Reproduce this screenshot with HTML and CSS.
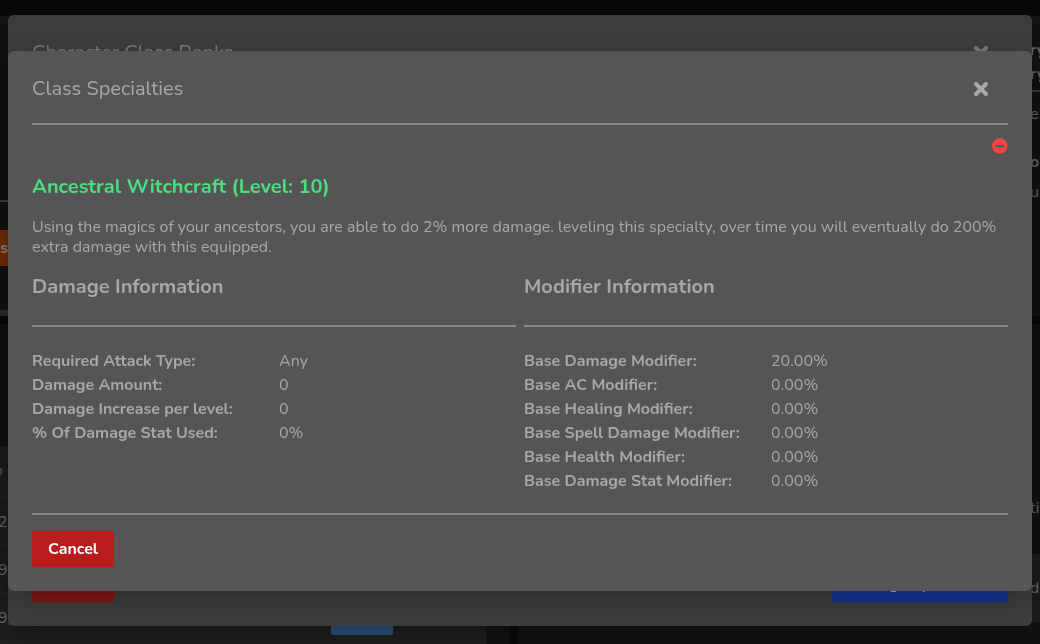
FILE: index.html
```html
<!DOCTYPE html>
<html lang="en">
<head>
<meta charset="utf-8">
<meta name="viewport" content="width=device-width, initial-scale=1">
<title>Class Specialties</title>
<link rel="stylesheet" href="styles.css">
</head>
<body>
<div class="page" aria-hidden="true">
  <div class="topbar"></div>
  <div class="columns">
    <div class="column">
      <section class="card card-top">
        <hr class="card-rule">
        <button class="orange-tab" type="button" tabindex="-1">s</button>
        <div class="scroll-track"></div>
      </section>
      <section class="card card-fill">
        <div class="list">
          <div class="list-row list-head">%</div>
          <div class="list-row">28</div>
          <div class="list-row">9,</div>
          <div class="list-row"><span>9,</span><span class="page-button"></span></div>
          <div class="list-row"></div>
        </div>
      </section>
    </div>
    <div class="column">
      <section class="card card-side">
        <div class="strip">
          <b class="s-line">ry</b>
          <b class="s-line">ry</b>
          <hr class="s-rule">
          <span class="s-item">e</span>
          <b class="s-item s-space">o</b>
          <span class="s-item">ur</span>
        </div>
      </section>
      <section class="card card-fill">
        <div class="strip strip-low">
          <span class="s-tab">tin</span>
          <span class="s-panel">d</span>
        </div>
      </section>
    </div>
  </div>
</div>

<div class="overlay">
  <div class="modal modal-back" aria-hidden="true">
    <header class="modal-header">
      <h3 class="modal-title">Character Class Ranks</h3>
      <button class="close" type="button" tabindex="-1" aria-label="Close">
        <svg viewBox="0 0 14 14" width="14" height="14"><path d="M2 2l10 10M12 2L2 12"/></svg>
      </button>
    </header>
    <footer class="modal-footer">
      <button class="btn btn-red" type="button" tabindex="-1">Cancel</button>
      <button class="btn btn-blue" type="button" tabindex="-1">Manage Specialties</button>
    </footer>
  </div>
</div>

<div class="overlay overlay-front">
  <div class="modal" role="dialog" aria-labelledby="dialog-title">
    <header class="modal-header">
      <h3 class="modal-title" id="dialog-title">Class Specialties</h3>
      <button class="close" type="button" aria-label="Close">
        <svg viewBox="0 0 14 14" width="14" height="14"><path d="M2 2l10 10M12 2L2 12"/></svg>
      </button>
    </header>
    <div class="modal-body">
      <div class="tools">
        <button class="remove" type="button" aria-label="Remove specialty">
          <svg viewBox="0 0 16 16" width="16" height="16"><path fill-rule="evenodd" d="M7.750 0.250a7.750 7.750 0 1 0 0 15.500A7.750 7.750 0 0 0 7.750 0.250zM4 7h7.500a.5.5 0 0 1 .5.5v1.300a.5.5 0 0 1-.5.5H4a.5.5 0 0 1-.5-.5V7.500a.5.5 0 0 1 .5-.5z"/></svg>
        </button>
      </div>
      <h4 class="specialty">Ancestral Witchcraft (Level: 10)</h4>
      <p class="description">Using the magics of your ancestors, you are able to do 2% more damage. leveling this specialty, over time you will eventually do 200% extra damage with this equipped.</p>
      <div class="info">
        <section>
          <h4 class="info-title">Damage Information</h4>
          <dl class="stats">
            <dt>Required Attack Type:</dt><dd>Any</dd>
            <dt>Damage Amount:</dt><dd>0</dd>
            <dt>Damage Increase per level:</dt><dd>0</dd>
            <dt>% Of Damage Stat Used:</dt><dd>0%</dd>
          </dl>
        </section>
        <section>
          <h4 class="info-title">Modifier Information</h4>
          <dl class="stats">
            <dt>Base Damage Modifier:</dt><dd>20.00%</dd>
            <dt>Base AC Modifier:</dt><dd>0.00%</dd>
            <dt>Base Healing Modifier:</dt><dd>0.00%</dd>
            <dt>Base Spell Damage Modifier:</dt><dd>0.00%</dd>
            <dt>Base Health Modifier:</dt><dd>0.00%</dd>
            <dt>Base Damage Stat Modifier:</dt><dd>0.00%</dd>
          </dl>
        </section>
      </div>
    </div>
    <footer class="modal-footer">
      <button class="btn btn-red" type="button">Cancel</button>
    </footer>
  </div>
</div>
</body>
</html>
```
FILE: styles.css
```css
* { box-sizing: border-box; }
body {
  margin: 0;
  background: #090909;
  color: #a8a8a8;
  font: 16px/24px Nunito, Lato, sans-serif;
  overflow: hidden;
}
h3, h4, p, dl, dd { margin: 0; }
button { font: inherit; color: inherit; border: 0; padding: 0; background: none; }
hr { border: 0; margin: 0; }

/* page under the dialogs */
.page { display: flex; flex-direction: column; height: 100vh; color: #6c6e6d; }
.topbar { height: 16px; flex: none; }
.columns { flex: 1; display: grid; grid-template-columns: 510fr 522fr; gap: 8px; min-height: 0; }
.column { display: flex; flex-direction: column; gap: 8px; min-width: 0; min-height: 0; }
.card { background: #121413; }
.card-top { height: 300px; flex: none; display: flex; flex-direction: column; padding-top: 184px; }
.card-side { height: 300px; flex: none; padding-top: 22px; }
.card-rule { height: 2px; background: #424242; }
.orange-tab {
  width: 8px; height: 36px; margin: 28px 0 44px;
  display: flex; align-items: center; justify-content: flex-end;
  background: #7a3009; color: #958d86; font-weight: 700;
}
.scroll-track { height: 6px; background: #2f2f2f; }
.card-fill { flex: 1; min-height: 0; overflow: hidden; padding-top: 122px; background: #111313; }
.list { margin-right: 24px; background: #1e1e1e; }
.list-row { height: 48px; display: flex; align-items: center; border-bottom: 1px solid #262626; text-indent: -2px; }
.list-head { height: 52px; padding-bottom: 4px; text-indent: -12px; }
.page-button {
  width: 62px; height: 36px; margin: 0 93px 6px auto; align-self: flex-end;
  background: #2b4b74; border-radius: 2px;
}
.strip { width: 10px; margin-left: auto; overflow: hidden; display: flex; flex-direction: column; }
.s-rule { height: 2px; margin: 4px 0 10px; background: #424242; }
.s-item { height: 24px; margin-bottom: 6px; }
.s-space { margin-top: 18px; }
.strip-low { margin-top: -122px; padding-top: 172px; }
.s-tab { padding-bottom: 34px; }
.s-panel { height: 68px; line-height: 68px; background: #1e1e1e; }

/* dialogs */
.overlay { position: fixed; inset: 0; padding: 15px 8px 18px; display: flex; }
.overlay-front { padding: 51px 8px; align-items: flex-start; }
.modal {
  flex: 1; display: flex; flex-direction: column;
  padding: 24px; border-radius: 6px;
  background: #555; box-shadow: 0 8px 28px rgba(0, 0, 0, .25);
}
.modal-back { background: #3d3d3d; color: #7a7a7a; justify-content: space-between; }
.modal-header {
  display: flex; justify-content: space-between; align-items: center;
  height: 50px; padding: 0 20px 20px 0; border-bottom: 2px solid #888;
}
.modal-back .modal-header { border-color: #666; }
.modal-title { font-size: 20px; font-weight: 400; }
.close { display: flex; }
.close svg { fill: none; stroke: currentColor; stroke-width: 4; stroke-linecap: round; }
.tools { display: flex; justify-content: flex-end; padding-top: 13px; }
.remove { display: flex; }
.remove svg { fill: #ef4444; }
.specialty { margin-top: 21px; font-size: 20px; font-weight: 700; color: #4ade80; }
.description { margin-top: 18px; line-height: 20px; }
.info { display: grid; grid-template-columns: 1fr 1fr; gap: 8px; margin-top: 18px; }
.info-title { padding-bottom: 26px; border-bottom: 2px solid #888; font-size: 20px; font-weight: 700; }
.stats { display: grid; grid-template-columns: 1fr 1fr; gap: 0 10px; margin: 22px 0 20px; }
.stats dt { font-weight: 700; }
.modal-footer { display: flex; justify-content: space-between; padding-top: 16px; border-top: 2px solid #888; }
.modal-back .modal-footer { border-color: #666; }
.btn { height: 36px; padding: 0 16px; border-radius: 2px; font-weight: 700; color: #fff; }
.btn-red { min-width: 82px; background: #b91c1c; }
.btn-blue { min-width: 176px; background: #1d4ed8; }
.modal-back .btn { color: #b3b3b3; }
.modal-back .btn-red { background: #801616; }
.modal-back .btn-blue { background: #14338f; }
```
